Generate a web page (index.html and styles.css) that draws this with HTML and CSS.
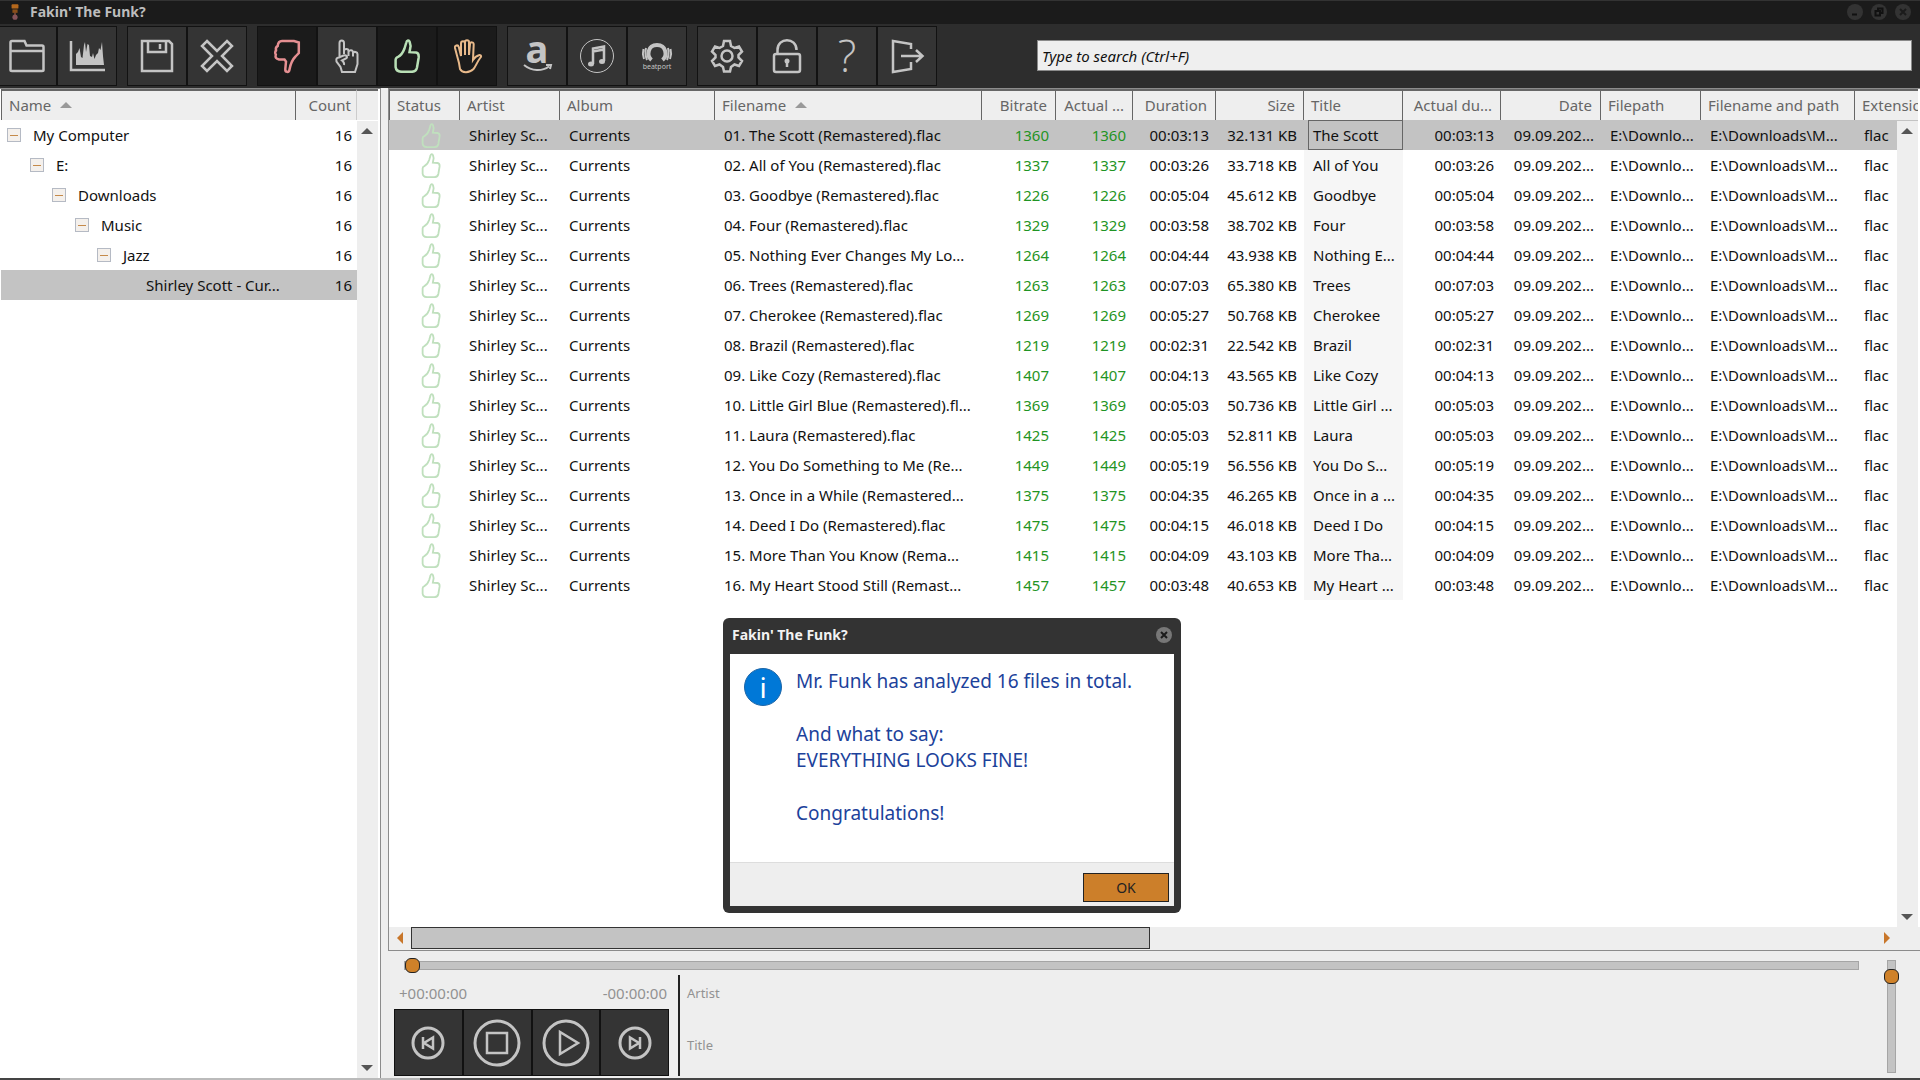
FILE: index.html
```html
<!DOCTYPE html>
<html lang="en">
  <head>
    <meta charset="UTF-8" />
    <meta name="viewport" content="width=device-width, initial-scale=1.0" />
    <title>Fakin' The Funk?</title>
    <link rel="stylesheet" href="styles.css">
  </head>
  <body>
    <!-- ======= Shared icons ======= -->
    <svg class="sprite" aria-hidden="true">
      <symbol id="thumb-up" viewBox="0 0 26 34">
        <path d="M10.5 9.5 12.3 3.5C12.8 1 15 .8 15.7 3L16.6 7 15.5 13.2 22 13.6C24.3 14 25 16 24.6 19L23 28.5C22.5 31 20.5 32.8 17.5 32.8H8C4 32.8 2 31 1.6 28V21C1.6 19.4 2.4 18.4 4 17.8 6.8 16.5 9 13.5 10.5 9.5Z" />
      </symbol>
      <symbol id="close" viewBox="0 0 16 16">
        <circle cx="8" cy="8" r="8" />
        <path d="M5 5 11 11M11 5 5 11" />
      </symbol>
    </svg>

    <!-- ======= Title Bar ======= -->
    <header class="titlebar">
      <svg class="app-icon" viewBox="0 0 14 18">
        <rect x="3" y="0" width="8" height="5" rx="1" fill="#b5681c" />
        <rect x="4" y="6" width="6" height="4" fill="#8a4f18" />
        <rect x="6" y="9" width="2" height="5" fill="#7d4a2c" />
        <circle cx="7" cy="15" r="3" fill="#86545a" />
      </svg>
      <h1>Fakin' The Funk?</h1>
      <div class="window-buttons">
        <button aria-label="Minimize"><svg viewBox="0 0 16 16"><circle cx="8" cy="8" r="8" /><path d="M5 10.5H10" /></svg></button>
        <button aria-label="Restore"><svg viewBox="0 0 16 16"><circle cx="8" cy="8" r="8" /><path d="M4.500 7H9V11.500H4.500ZM7 6.500V4.500H11.500V9H9.500" /></svg></button>
        <button aria-label="Close"><svg><use href="#close" /></svg></button>
      </div>
    </header>

    <!-- ======= Toolbar ======= -->
    <div class="toolbar">
      <div class="tool-group">
        <button class="tool" aria-label="Open folder">
          <svg viewBox="0 0 40 40"><path d="M3.500 34V6.500Q3.500 5 5 5H17.500L19.500 9.500H35Q36.500 9.500 36.500 11V34Q36.500 35 35 35H5Q3.500 35 3.500 34M3.500 15H36.500" /></svg>
        </button>
        <button class="tool" aria-label="Spectrum">
          <svg viewBox="0 0 40 40"><path d="M4 5V34H38" /><path class="solid" d="M9 29V18L11 16 12.500 12 14 21 15.500 22 17 9 18 6 19 16 20.500 8 22 9 23 20 25 21 26 17 27.500 23 29 19 31 17 32 12 33.500 14 35 6 36 20 37 29Z" /></svg>
        </button>
      </div>
      <div class="tool-group">
        <button class="tool" aria-label="Save">
          <svg viewBox="0 0 40 40"><path d="M5 5H32L35 8V35H5ZM11 5V16H29V5M23 8V13" /></svg>
        </button>
        <button class="tool" aria-label="Remove">
          <svg viewBox="0 0 40 40"><path d="M10 5 20 15 30 5 35 10 25 20 35 30 30 35 20 25 10 35 5 30 15 20 5 10Z" /></svg>
        </button>
      </div>
      <div class="tool-group">
        <button class="tool active red" aria-label="Show bad files">
          <svg viewBox="-7 -3 40 40"><path d="M8 2H20L24.800 3.500V14L21.500 17.500C18 21 16.500 25 15.500 30.500 15 34 11 33.500 11.300 30L12 22.500 10.500 20.500H5C2 20 1 18.500 1.800 15.500 1 14.500 1 12.500 2 11.500 1.500 9 2.500 7.500 3.700 7 4 3.500 5.500 2 8 2Z" /></svg>
        </button>
        <button class="tool" aria-label="Show unknown files">
          <svg viewBox="-8 -3 40 40"><path class="medium" d="M4.500 18V4C4.500.500 9 .500 9 4V15M9 14V11.500C9.500 9.500 13.500 9.500 13.500 12V17M13.500 13C14 10.500 18 10.500 18 13.500V17.500M18 14C19 12 22.500 13 22.500 15V25L20 33H7L5.500 28 1.500 22.500C1 20 1.500 18.500 4 18.500L8.500 16.500C11.500 15.500 13 18 11 19.500L7 21.500C9 23 9.500 24 9 26" /></svg>
        </button>
        <button class="tool active green" aria-label="Show good files">
          <svg viewBox="-7 -3 40 40"><use href="#thumb-up" width="26" height="34" /></svg>
        </button>
        <button class="tool active orange" aria-label="Stop filter">
          <svg viewBox="-6 -3 40 40"><path class="medium" d="M6 24 2 9C1.500 6 5 5.500 5.800 8L8 17V4.500C8 1.500 12 1.500 12 4.500V16 3C12 .500 16 .500 16 3V16L17 5C17.500 2.500 20.800 3 20.700 5.500L20 21C22 18 24 16.500 26.500 16 28.500 16 28.500 17.500 27.500 18.500 24 23 23 27 20.500 30 16 34.500 9 34 7 30Z" /></svg>
        </button>
      </div>
      <div class="tool-group">
        <button class="tool" aria-label="Search on Amazon">
          <svg viewBox="0 0 40 40"><text class="letter-a" x="20" y="27">a</text><path class="medium" d="M7 29C15 35.500 25 35.500 32 30.500M29 29H34L33 33" /></svg>
        </button>
        <button class="tool" aria-label="Search on iTunes">
          <svg viewBox="0 0 40 40"><circle class="thin" cx="20" cy="20" r="16.500" /><path d="M16 28V12.500L27 10.500V25M16 15.500 27 13.500" /><ellipse class="solid" cx="14" cy="28" rx="3" ry="2.500" /><ellipse class="solid" cx="25" cy="25.500" rx="3" ry="2.500" /></svg>
        </button>
        <button class="tool" aria-label="Search on Beatport">
          <svg viewBox="0 0 40 40"><path class="thick" d="M14.500 24C9.500 20 10.500 9 20 9S30.500 20 25.500 24" /><path class="medium" d="M9 12Q7.500 18 10 24M31 12Q32.500 18 30 24M6.500 13Q5 18 7 23M33.500 13Q35 18 33 23" /><text class="beatport" x="20" y="33">beatport</text></svg>
        </button>
      </div>
      <div class="tool-group">
        <button class="tool" aria-label="Settings">
          <svg viewBox="0 0 40 40"><circle cx="20" cy="20" r="5.500" /><path d="M17 5H23L24 10 27.500 12 32 10.500 35 15.500 31.500 19V21.500L35 25 32 30 27.500 28.500 24 31 23 35.500H17L16 31 12.500 28.500 8 30 5 25 8.500 21.500V19L5 15.500 8 10.500 12.500 12 16 10Z" /></svg>
        </button>
        <button class="tool" aria-label="Unlock">
          <svg viewBox="0 0 40 40"><rect x="7" y="18" width="26" height="18" rx="2" /><path d="M10.500 18V14C10.500 1 29.500 1 29.500 14M20 26V31" /><circle class="solid" cx="20" cy="25" r="2.500" /></svg>
        </button>
        <button class="tool" aria-label="Help">
          <svg viewBox="0 0 40 40"><text class="question" x="20" y="36">?</text></svg>
        </button>
        <button class="tool" aria-label="Exit">
          <svg viewBox="0 0 40 40"><path d="M24 13V8L6 5V36L24 33V26M14 20H35M29 14 35.500 20 29 26" /></svg>
        </button>
      </div>
      <input type="text" class="search" aria-label="Search" placeholder="Type to search (Ctrl+F)" />
    </div>

    <main>
      <!-- ======= Folder Tree ======= -->
      <section class="tree-panel">
        <table class="tree">
          <colgroup><col><col class="w-count"><col class="w-bar"></colgroup>
          <thead>
            <tr><th>Name <span class="sort"></span></th><th class="num">Count</th><th class="filler"></th></tr>
          </thead>
          <tbody>
            <tr><td class="lvl-1"><button class="toggle" aria-label="Collapse"></button>My Computer</td><td class="num">16</td><td></td></tr>
            <tr><td class="lvl-2"><button class="toggle" aria-label="Collapse"></button>E:</td><td class="num">16</td><td></td></tr>
            <tr><td class="lvl-3"><button class="toggle" aria-label="Collapse"></button>Downloads</td><td class="num">16</td><td></td></tr>
            <tr><td class="lvl-4"><button class="toggle" aria-label="Collapse"></button>Music</td><td class="num">16</td><td></td></tr>
            <tr><td class="lvl-5"><button class="toggle" aria-label="Collapse"></button>Jazz</td><td class="num">16</td><td></td></tr>
            <tr class="selected"><td class="lvl-6">Shirley Scott - Cur...</td><td class="num">16</td><td></td></tr>
          </tbody>
        </table>
        <div class="vbar"><span class="arrow up"></span><span class="arrow down"></span></div>
      </section>

      <div class="right">
        <!-- ======= File List ======= -->
        <section class="files-panel">
          <table class="files">
            <colgroup>
              <col class="w-status"><col class="w-std"><col class="w-album"><col class="w-filename">
              <col class="w-bitrate"><col class="w-actual"><col class="w-duration"><col class="w-size">
              <col class="w-title"><col class="w-real"><col class="w-std"><col class="w-std"><col class="w-path"><col>
            </colgroup>
            <thead>
              <tr>
                <th>Status</th><th>Artist</th><th>Album</th><th>Filename <span class="sort"></span></th>
                <th class="num">Bitrate</th><th class="num">Actual ...</th><th class="num">Duration</th><th class="num">Size</th>
                <th>Title</th><th class="num">Actual du...</th><th class="num">Date</th><th>Filepath</th>
                <th>Filename and path</th><th>Extension</th>
              </tr>
            </thead>
            <tbody id="rows"></tbody>
          </table>
          <div class="vbar"><span class="arrow up"></span><span class="arrow down"></span></div>
        </section>
        <div class="hbar">
          <span class="arrow left"></span>
          <div class="htrack"><div class="hthumb"></div></div>
          <span class="arrow right-arrow"></span>
        </div>

        <!-- ======= Player ======= -->
        <section class="player">
          <div class="player-main">
            <input type="range" class="seek" aria-label="Position" min="0" max="100" value="0" />
            <div class="player-row">
              <div class="deck">
                <div class="times"><span>+00:00:00</span><span>-00:00:00</span></div>
                <div class="controls">
                  <button aria-label="Previous"><svg viewBox="0 0 48 48"><circle cx="24" cy="24" r="15" /><path d="M19 18V30M29 18.500V29.500L20 24Z" /></svg></button>
                  <button aria-label="Stop"><svg viewBox="0 0 48 48"><circle cx="24" cy="24" r="22" /><path d="M14 14H34V34H14Z" /></svg></button>
                  <button aria-label="Play"><svg viewBox="0 0 48 48"><circle cx="24" cy="24" r="22" /><path d="M18 13V35L36 24Z" /></svg></button>
                  <button aria-label="Next"><svg viewBox="0 0 48 48"><circle cx="24" cy="24" r="15" /><path d="M29 18V30M19 18.500V29.500L28 24Z" /></svg></button>
                </div>
              </div>
              <div class="track-info"><span>Artist</span><span>Title</span></div>
            </div>
          </div>
          <input type="range" class="volume" aria-label="Volume" min="0" max="100" value="92" />
        </section>
      </div>
    </main>
    <footer class="edge"></footer>

    <!-- ======= Result Dialog ======= -->
    <div class="dialog" role="dialog" aria-labelledby="dialog-title">
      <div class="dialog-head">
        <h2 id="dialog-title">Fakin' The Funk?</h2>
        <button class="dialog-close" aria-label="Close dialog"><svg><use href="#close" /></svg></button>
      </div>
      <div class="dialog-body">
        <span class="info">i</span>
        <div class="message">
          <p>Mr. Funk has analyzed 16 files in total.</p>
          <p>And what to say:<br>EVERYTHING LOOKS FINE!</p>
          <p>Congratulations!</p>
        </div>
      </div>
      <div class="dialog-foot"><button class="ok">OK</button></div>
    </div>

    <!-- ======= JavaScript ======= -->
    <script>
      // filename, bitrate, duration, size, title
      const files = [
        ["01. The Scott (Remastered).flac", 1360, "00:03:13", "32.131 KB", "The Scott"],
        ["02. All of You (Remastered).flac", 1337, "00:03:26", "33.718 KB", "All of You"],
        ["03. Goodbye (Remastered).flac", 1226, "00:05:04", "45.612 KB", "Goodbye"],
        ["04. Four (Remastered).flac", 1329, "00:03:58", "38.702 KB", "Four"],
        ["05. Nothing Ever Changes My Lo...", 1264, "00:04:44", "43.938 KB", "Nothing E..."],
        ["06. Trees (Remastered).flac", 1263, "00:07:03", "65.380 KB", "Trees"],
        ["07. Cherokee (Remastered).flac", 1269, "00:05:27", "50.768 KB", "Cherokee"],
        ["08. Brazil (Remastered).flac", 1219, "00:02:31", "22.542 KB", "Brazil"],
        ["09. Like Cozy (Remastered).flac", 1407, "00:04:13", "43.565 KB", "Like Cozy"],
        ["10. Little Girl Blue (Remastered).fl...", 1369, "00:05:03", "50.736 KB", "Little Girl ..."],
        ["11. Laura (Remastered).flac", 1425, "00:05:03", "52.811 KB", "Laura"],
        ["12. You Do Something to Me (Re...", 1449, "00:05:19", "56.556 KB", "You Do S..."],
        ["13. Once in a While (Remastered...", 1375, "00:04:35", "46.265 KB", "Once in a ..."],
        ["14. Deed I Do (Remastered).flac", 1475, "00:04:15", "46.018 KB", "Deed I Do"],
        ["15. More Than You Know (Rema...", 1415, "00:04:09", "43.103 KB", "More Tha..."],
        ["16. My Heart Stood Still (Remast...", 1457, "00:03:48", "40.653 KB", "My Heart ..."],
      ];

      document.getElementById("rows").innerHTML = files
        .map(
          ([name, bitrate, duration, size, title], i) => `
          <tr${i === 0 ? ' class="selected"' : ""}>
            <td class="status"><svg><use href="#thumb-up" /></svg></td>
            <td>Shirley Sc...</td>
            <td>Currents</td>
            <td>${name}</td>
            <td class="num good">${bitrate}</td>
            <td class="num good">${bitrate}</td>
            <td class="num">${duration}</td>
            <td class="num">${size}</td>
            <td class="title">${title}</td>
            <td class="num">${duration}</td>
            <td class="num">09.09.202...</td>
            <td>E:\\Downlo...</td>
            <td>E:\\Downloads\\M...</td>
            <td>flac</td>
          </tr>`
        )
        .join("");
    </script>
  </body>
</html>
```
FILE: styles.css
```css
* {
  box-sizing: border-box;
}

body {
  margin: 0;
  min-height: 100vh;
  display: flex;
  flex-direction: column;
  background: #eeeeee;
  color: #111;
  font-family: "Noto Sans", "Open Sans", sans-serif;
  font-size: 15px;
  line-height: 20px;
}

button {
  padding: 0;
  border: none;
  background: none;
  font-family: inherit;
  cursor: pointer;
}

h1,
h2,
p {
  margin: 0;
}

.sprite {
  display: none;
}

/* ======= Title Bar ======= */
.titlebar {
  display: flex;
  align-items: center;
  height: 24px;
  padding: 0 9px 2px;
  background: #1b1b1b;
  border-top: 1px solid #333;
}

.app-icon {
  width: 12px;
  height: 18px;
  margin-right: 9px;
}

.titlebar h1,
.dialog-head h2 {
  font-size: 14px;
  font-weight: bold;
}

.titlebar h1 {
  flex: 1;
  color: #bdbdbd;
}

.window-buttons {
  display: flex;
  gap: 8px;
}

.window-buttons button,
.dialog-close {
  width: 16px;
  height: 16px;
}

.window-buttons svg,
.dialog-close svg {
  display: block;
  width: 16px;
  height: 16px;
  fill: #333;
  stroke: none;
}

.window-buttons path {
  fill: none;
  stroke: #111;
  stroke-width: 2;
}

#close path {
  stroke: #1b1b1b;
  stroke-width: 2;
}

/* ======= Toolbar ======= */
.toolbar {
  display: flex;
  align-items: center;
  gap: 10px;
  height: 64px;
  padding: 0 8px 1px 0;
  background: #2d2d2d;
}

.tool-group {
  display: flex;
}

.tool-group:first-child {
  margin-left: -3px;
}

.tool {
  width: 60px;
  height: 60px;
  background: #343434;
  border: 1px solid #121212;
  display: flex;
  align-items: center;
  justify-content: center;
}

.tool svg {
  width: 40px;
  height: 40px;
  overflow: visible;
  fill: none;
  stroke: #c4c4c4;
  stroke-width: 2.5;
}

.tool.active {
  background: #1b1b1b;
}

.tool.red svg {
  stroke: #e58f92;
}

.tool.green svg {
  stroke: #b9e0b6;
}

.tool.orange svg {
  stroke: #e8b98a;
}

.tool .solid {
  fill: #c4c4c4;
  stroke: none;
}

.tool .thin {
  stroke-width: 1;
}

.tool .medium {
  stroke-width: 2;
}

.tool .thick {
  stroke-width: 4;
}

.tool text {
  fill: #c4c4c4;
  stroke: none;
  text-anchor: middle;
}

.letter-a {
  font-size: 38px;
  font-weight: bold;
}

.beatport {
  font-size: 7px;
}

.question {
  font-family: "Open Sans", sans-serif;
  font-size: 44px;
  font-weight: 300;
}

.search {
  flex: 1;
  height: 31px;
  margin-left: 90px;
  padding: 0 4px;
  border: 1px solid #8a8a8a;
  background: #efefef;
  font-family: inherit;
  font-size: 15px;
  font-style: italic;
  outline: none;
}

.search::placeholder {
  color: #111;
  opacity: 1;
}

/* ======= Layout ======= */
main {
  flex: 1;
  display: grid;
  grid-template-columns: 381px 1fr;
  column-gap: 7px;
}

.right {
  display: flex;
  flex-direction: column;
  min-width: 0;
}

.tree-panel,
.files-panel {
  display: grid;
  grid-template-rows: 32px 1fr;
  grid-template-columns: 1fr 21px;
  padding-right: 2px;
  background: #fff;
  border: 1px solid #8c8c8c;
  border-bottom: none;
}

.tree-panel {
  padding-left: 1px;
  border-left: none;
}

.files-panel {
  flex: 1;
  border-right: none;
}

/* ======= Tables ======= */
table {
  grid-area: 1 / 1 / 3 / 3;
  width: 100%;
  align-self: start;
  table-layout: fixed;
  border-collapse: separate;
  border-spacing: 0;
}

th {
  height: 31px;
  padding: 0 8px 1px 7px;
  overflow: hidden;
  background: #eeeeee;
  border-top: 2px solid #666;
  border-right: 1px solid #666;
  color: #666;
  font-weight: normal;
  text-align: left;
  white-space: nowrap;
}

th:first-child {
  border-left: 1px solid #666;
}

th:last-child {
  border-right: none;
}

td {
  height: 30px;
  padding: 0 7px 0 9px;
  overflow: hidden;
  white-space: nowrap;
}

.num {
  text-align: right;
}

.sort {
  display: inline-block;
  margin: 0 0 4px 5px;
  border: 6px solid transparent;
  border-top: none;
  border-bottom-color: #999;
  vertical-align: middle;
}

.selected td {
  background: #c3c3c3;
}

.tree .num {
  padding-right: 5px;
}

.tree th:nth-child(2) {
  border-right-color: #ccc;
}

.w-count {
  width: 61px;
}

.w-bar {
  width: 21px;
}

.toggle {
  width: 14px;
  height: 14px;
  margin: 0 12px 3px 0;
  border: 1px solid #b5bac4;
  background: linear-gradient(#c58a4a, #c58a4a) center / 8px 1px no-repeat #f4f0ec;
  vertical-align: middle;
}

.lvl-1 { padding-left: 6px; }
.lvl-2 { padding-left: 29px; }
.lvl-3 { padding-left: 51px; }
.lvl-4 { padding-left: 74px; }
.lvl-5 { padding-left: 96px; }
.lvl-6 { padding-left: 145px; }

.w-status { width: 71px; }
.w-std { width: 100px; }
.w-album { width: 155px; }
.w-filename { width: 267px; }
.w-bitrate { width: 74px; }
.w-actual { width: 77px; }
.w-duration { width: 83px; }
.w-size { width: 88px; }
.w-title { width: 99px; }
.w-real { width: 98px; }
.w-path { width: 154px; }

.status {
  padding: 0 7px 0 32px;
}

.status svg {
  display: block;
  width: 20px;
  height: 25px;
  fill: none;
  stroke: #c0e0be;
  stroke-width: 2.5;
}

.good {
  color: #1f9424;
}

.title {
  background: #f6f6f6;
}

.selected .title {
  box-shadow: inset 4px 0 #c3c3c3, inset 5px 1px #666, inset -1px -1px #666;
}

/* ======= Scroll Bars ======= */
.vbar {
  grid-area: 2 / 2;
  display: flex;
  flex-direction: column;
  justify-content: space-between;
  align-items: center;
  padding: 7px 2px 7px 0;
  background: #eeeeee;
}

.arrow {
  border: 6px solid transparent;
}

.up {
  border-top: none;
  border-bottom-color: #555;
}

.down {
  border-bottom: none;
  border-top-color: #555;
}

.left {
  border-left: none;
  border-right-color: #c8762a;
}

.right-arrow {
  border-right: none;
  border-left-color: #c8762a;
}

.hbar {
  display: flex;
  align-items: center;
  gap: 8px;
  height: 24px;
  padding: 0 30px 1px 8px;
  border-left: 1px solid #8c8c8c;
  border-bottom: 1px solid #8c8c8c;
}

.htrack {
  flex: 1;
}

.hthumb {
  width: calc(50% + 6px);
  height: 22px;
  background: #c3c3c3;
  border: 1px solid #333;
}

/* ======= Player ======= */
.player {
  display: flex;
  justify-content: space-between;
  height: 127px;
  padding: 9px 21px 4px 6px;
}

.player-main {
  flex: 1;
}

.seek,
.volume {
  display: block;
  margin: 0;
  appearance: none;
  background: none;
}

.seek {
  width: calc(100% - 35px);
  height: 15px;
  margin: -2px 0 0 10px;
}

.seek::-webkit-slider-runnable-track {
  height: 9px;
  background: #c3c3c3;
  border: 1px solid #a5a5a5;
}

.volume {
  width: 15px;
  height: 113px;
  writing-mode: vertical-lr;
  direction: rtl;
}

.volume::-webkit-slider-runnable-track {
  width: 9px;
  background: #c3c3c3;
  border: 1px solid #a5a5a5;
}

.seek::-webkit-slider-thumb,
.volume::-webkit-slider-thumb {
  appearance: none;
  width: 15px;
  height: 15px;
  background: #cf8129;
  border: 1px solid #222;
  border-radius: 6px;
}

.seek::-webkit-slider-thumb {
  margin-top: -4px;
}

.volume::-webkit-slider-thumb {
  margin-left: -4px;
}

.player-row {
  display: flex;
  gap: 9px;
  margin-top: 2px;
  color: #929292;
}

.deck {
  width: 275px;
}

.times {
  display: flex;
  justify-content: space-between;
  padding: 8px 2px 6px 5px;
}

.controls {
  display: flex;
  border: 1px solid #111;
}

.controls button {
  flex: 1;
  height: 65px;
  background: #343434;
  border-right: 2px solid #111;
}

.controls button:last-child {
  border-right: none;
}

.controls svg {
  display: block;
  width: 48px;
  height: 48px;
  margin: 0 auto;
  fill: none;
  stroke: #c4c4c4;
  stroke-width: 3;
}

.controls path {
  stroke-width: 2.5;
}

.track-info {
  display: flex;
  flex-direction: column;
  gap: 32px;
  padding: 8px 0 0 7px;
  border-left: 2px solid #222;
  font-size: 13px;
}

.edge {
  height: 2px;
  background: linear-gradient(to right, #444 60px, #bbb 60px, #bbb 420px, #444 420px);
}

/* ======= Dialog ======= */
.dialog {
  position: absolute;
  top: 618px;
  left: 723px;
  width: 458px;
  padding: 0 7px 7px;
  background: #333;
  border-radius: 6px;
}

.dialog-head {
  display: flex;
  align-items: center;
  justify-content: space-between;
  height: 36px;
  padding: 0 2px 2px;
}

.dialog-head h2 {
  color: #f2f2f2;
}

.dialog-close svg {
  fill: #777;
}

.dialog-body {
  display: flex;
  gap: 14px;
  height: 208px;
  padding: 14px;
  background: #fff;
}

.info {
  width: 38px;
  height: 38px;
  background: #0078d7;
  border: 1px solid #1d66a8;
  border-radius: 50%;
  color: #fff;
  font-size: 28px;
  line-height: 36px;
  text-align: center;
}

.message {
  color: #1c429b;
  font-size: 19px;
  line-height: 26px;
}

.message p {
  margin-bottom: 27px;
}

.dialog-foot {
  display: flex;
  justify-content: flex-end;
  align-items: center;
  height: 44px;
  padding: 5px 5px 0;
  background: #eeeeee;
  border-top: 1px solid #ddd;
}

.ok {
  width: 86px;
  height: 29px;
  background: #cc7f2a;
  border: 1px solid #222;
  color: #222;
  font-size: 14px;
}
```
